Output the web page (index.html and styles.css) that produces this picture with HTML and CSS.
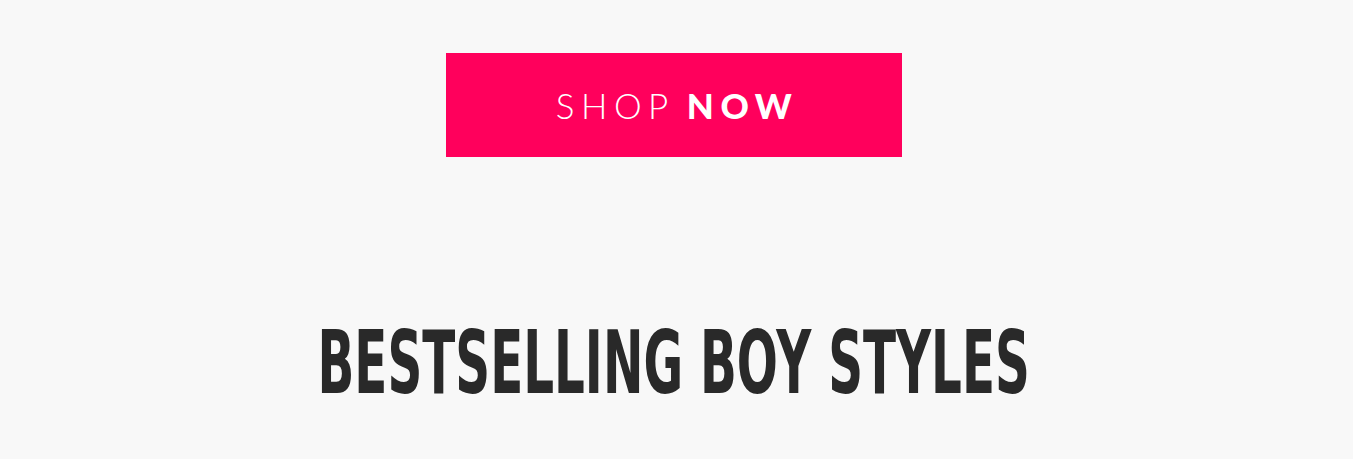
FILE: index.html
```html
<!DOCTYPE html>
<html lang="en">
<head>
  <meta charset="UTF-8">
  <title>Shop Now</title>
  <link rel="stylesheet" href="styles.css">
</head>
<body>
<div class="page">
  <div class="cta_wrap">
    <a class="cta" href="#">SHOP <b>NOW</b></a>
  </div>
  <h2 class="section_title">BESTSELLING BOY STYLES</h2>
</div>
</body>
</html>
```

FILE: styles.css
```css
body, html {
  margin: 0;
  background: #f8f8f8;
}
.page {
  width: 100%;
  padding-right: 5px;
  box-sizing: border-box;
  display: flex;
  flex-direction: column;
  align-items: center;
}
.cta_wrap {
  padding-top: 53px;
}
.cta {
  display: flex;
  align-items: center;
  justify-content: center;
  width: 456px;
  height: 104px;
  background: #ff005c;
  color: #fff;
  text-decoration: none;
  font-family: Lato, "Open Sans", sans-serif;
  font-weight: 300;
  font-size: 35px;
  letter-spacing: 6.5px;
  padding-left: 6px;
  box-sizing: border-box;
}
.cta b {
  font-weight: 900;
  margin-left: 12px;
}
.section_title {
  margin: 0;
  margin-top: 156px;
  font-family: "DejaVu Sans", sans-serif;
  font-weight: 700;
  font-size: 88px;
  line-height: 100px;
  color: #292929;
  letter-spacing: 0;
  white-space: nowrap;
  transform: scaleX(0.55);
}
```
